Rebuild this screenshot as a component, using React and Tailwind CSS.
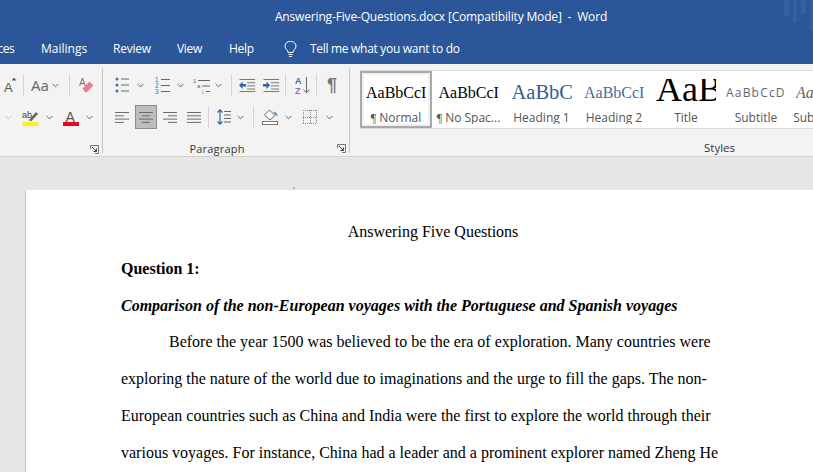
const ui = { fontFamily: '"Open Sans", "Noto Sans", sans-serif' };

function Chevron({ className = "", color = "#666" }) {
  return (
    <svg width="7" height="5" viewBox="0 0 7 5" className={className}>
      <path d="M0.7 1 L3.5 3.8 L6.3 1" fill="none" stroke={color} strokeWidth="1" />
    </svg>
  );
}

function Sep({ className = "" }) {
  return <div className={`w-px h-[22px] bg-[#d4d4d4] ${className}`} />;
}

function Launcher({ className = "" }) {
  return (
    <svg width="9" height="9" viewBox="0 0 9 9" className={className}>
      <path d="M0.5 4V0.5H8.5V8.5H5" fill="none" stroke="#777" />
      <path d="M2 2L6.5 6.5M6.5 3.5V6.5H3.5" fill="none" stroke="#444" />
    </svg>
  );
}

function Lines({ className = "", rows, w = 14 }) {
  return (
    <svg width={w} height="13" viewBox={`0 0 ${w} 13`} className={className}>
      {rows.map(([x1, x2], i) => (
        <path key={i} d={`M${x1} ${1.5 + i * 3.3}H${x2}`} stroke="#6b6b6b" strokeWidth="1" />
      ))}
    </svg>
  );
}

function Bullets({ className = "" }) {
  return (
    <svg width="14" height="16" viewBox="0 0 14 16" className={className}>
      {[2, 8, 14].map((y) => (
        <g key={y}>
          <circle cx="2" cy={y} r="1.5" fill="#3f6fa5" />
          <path d={`M6 ${y}H14`} stroke="#666" />
        </g>
      ))}
    </svg>
  );
}

function Numbered({ className = "" }) {
  return (
    <svg width="15" height="17" viewBox="0 0 15 17" className={className}>
      {[["1", 5], ["2", 11], ["3", 17]].map(([n, y]) => (
        <g key={n}>
          <text x="0" y={y} fontSize="6.5" fill="#3f6fa5" fontFamily="Liberation Sans">{n}</text>
          <path d={`M6 ${y - 2.5}H15`} stroke="#666" />
        </g>
      ))}
    </svg>
  );
}

function Multilevel({ className = "" }) {
  return (
    <svg width="17" height="17" viewBox="0 0 17 17" className={className}>
      <text x="0" y="6" fontSize="6" fill="#3f6fa5" fontFamily="Liberation Sans">1</text>
      <path d="M5 3.5H17" stroke="#666" />
      <text x="4" y="11" fontSize="6" fill="#3f6fa5" fontFamily="Liberation Sans">a</text>
      <path d="M9 9H17" stroke="#666" />
      <text x="9" y="17" fontSize="6" fill="#3f6fa5" fontFamily="Liberation Sans">i</text>
      <path d="M13 14.5H17" stroke="#666" />
    </svg>
  );
}

function Indent({ className = "", flip }) {
  return (
    <svg width="16" height="13" viewBox="0 0 16 13" className={className}>
      <path d="M0.5 0.5H16M8 3.7H16M8 6.9H16M8 10H16M0.5 12.5H16" stroke="#777" />
      {flip ? (
        <path d="M0 5H3.5V2.5L7 6.3L3.5 10V7.6H0Z" fill="#2d6aa5" />
      ) : (
        <path d="M7 5H3.5V2.5L0 6.3L3.5 10V7.6H7Z" fill="#2d6aa5" />
      )}
    </svg>
  );
}

function Sort({ className = "" }) {
  return (
    <svg width="15" height="18" viewBox="0 0 15 18" className={className}>
      <text x="0" y="8" fontSize="9" fontWeight="700" fill="#3f6fa5" fontFamily="Liberation Sans">A</text>
      <text x="0" y="17.5" fontSize="9" fontWeight="700" fill="#a065b5" fontFamily="Liberation Sans">Z</text>
      <path d="M11.5 1V16.5M8.5 13.5L11.5 16.8L14.5 13.5" fill="none" stroke="#666" />
    </svg>
  );
}

function Eraser({ className = "" }) {
  return (
    <svg width="15" height="16" viewBox="0 0 15 16" className={className}>
      <text x="0" y="9" fontSize="10" fill="#777" fontFamily="Liberation Sans">A</text>
      <path d="M3.5 11.5L10.5 4.5L14.5 8.5L8 15H6Z" fill="#e7808c" />
    </svg>
  );
}

function LineSpacing({ className = "" }) {
  return (
    <svg width="14" height="16" viewBox="0 0 14 16" className={className}>
      <path d="M3 1V15M0.5 3.5L3 0.8L5.5 3.5M0.5 12.5L3 15.2L5.5 12.5" fill="none" stroke="#2d6aa5" strokeWidth="1.2" />
      <path d="M7 2.5H14M7 6H14M7 9.5H14M7 13H14" stroke="#666" />
    </svg>
  );
}

function Shading({ className = "" }) {
  return (
    <svg width="17" height="16" viewBox="0 0 17 16" className={className}>
      <path d="M7.5 1L13 6.5L8 11L2.5 6Z" fill="#fff" stroke="#666" />
      <path d="M11 2.5C14 3 15.5 5 15.5 7.5L13 5Z" fill="#2d6aa5" />
      <rect x="0.5" y="12.5" width="15" height="3" fill="#fff" stroke="#777" />
    </svg>
  );
}

function Borders({ className = "" }) {
  return (
    <svg width="14" height="14" viewBox="0 0 14 14" className={className}>
      <path d="M0 0.5H14M0 7.5H14M0 13.5H14M0.5 0V14M7.5 0V14M13.5 0V14" fill="none" stroke="#8a8a8a" strokeDasharray="1 1" />
    </svg>
  );
}

function Highlight({ className = "" }) {
  return (
    <svg width="17" height="16" viewBox="0 0 17 16" className={className}>
      <text x="0" y="8" fontSize="9" fill="#444" fontFamily="Liberation Sans">ab</text>
      <path d="M7 10L14 2L16 4L9 11.5Z" fill="#666" />
      <rect x="0.5" y="12" width="16" height="4" fill="#fcee21" />
    </svg>
  );
}

function FontColor({ className = "" }) {
  return (
    <svg width="16" height="16" viewBox="0 0 16 16" className={className}>
      <text x="2.5" y="11.5" fontSize="14" fill="#555" fontFamily="Liberation Sans">A</text>
      <rect y="12" width="16" height="4" fill="#e00b1c" />
    </svg>
  );
}

function GrowFont({ className = "" }) {
  return (
    <svg width="13" height="16" viewBox="0 0 13 16" className={className}>
      <text x="0" y="15" fontSize="13" fill="#555" fontFamily="Liberation Sans">A</text>
      <path d="M7.5 3.5L10 0.5L12.5 3.5Z" fill="#2d6aa5" />
    </svg>
  );
}

function Bulb({ className = "" }) {
  return (
    <svg width="13" height="17" viewBox="0 0 13 17" className={className}>
      <path d="M4 11.5C4 9 1 8 1 5A5.5 4.7 0 0 1 12 5C12 8 9 9 9 11.5Z" fill="none" stroke="#fff" />
      <path d="M4.5 13.5H8.5M5 15.5H8" stroke="#fff" />
    </svg>
  );
}

function StyleItem({ preview, label, previewClass, boxClass = "mt-0 h-[35px]", width, selected, mark }) {
  return (
    <div
      className={`shrink-0 flex flex-col items-center overflow-hidden h-full ${width} ${
        selected ? "border-2 border-[#a9a9a9] bg-[#f0f0f0] p-[2px]" : "p-[4px]"
      }`}
    >
      <div className={`w-full h-full flex flex-col items-center overflow-hidden ${selected ? "bg-white" : ""}`}>
        <div className={`w-[60px] shrink-0 flex items-center whitespace-nowrap overflow-hidden ${boxClass} ${previewClass}`}>
          {preview}
        </div>
        <div className="text-[12px] leading-[16px] text-[#555] whitespace-nowrap">
          {mark && <span className="font-['Liberation_Serif']">¶ </span>}
          {label}
        </div>
      </div>
    </div>
  );
}

export default function App() {
  return (
    <div className="w-[813px] h-[472px] overflow-hidden flex flex-col bg-[#e6e6e6]" style={ui}>
      {/* title bar */}
      <div className="bg-[#2b579a] h-[64px] shrink-0 text-white relative">
        <div className="h-[32px] pt-[2px] flex items-center justify-center text-[12px] whitespace-pre pl-[69px] tracking-[-0.16px]">
          Answering-Five-Questions.docx [Compatibility Mode]  -  Word
        </div>
        <div className="h-[32px] pt-[2px] flex items-center text-[12px] whitespace-nowrap">
          <span className="w-[14px] tracking-[-0.6px] flex justify-end">ces</span>
          <span className="ml-[27px] w-[45px]">Mailings</span>
          <span className="ml-[27px] w-[37px] tracking-[-0.25px]">Review</span>
          <span className="ml-[27px] w-[25px] tracking-[-0.3px]">View</span>
          <span className="ml-[27px] w-[25px] tracking-[-0.25px]">Help</span>
          <Bulb className="ml-[30px]" />
          <span className="ml-[13px] tracking-[-0.3px]">Tell me what you want to do</span>
        </div>
        {/* faint stripes in the corner */}
        <div className="absolute top-0 right-0 flex gap-[4px] items-start">
          <div className="w-[5px] h-[16px] bg-[#34609f]" />
          <div className="w-[4px] h-[22px] bg-[#34609f]" />
          <div className="w-[5px] h-[14px] bg-[#34609f]" />
          <div className="w-[3px] h-[31px] bg-[#34609f]" />
        </div>
      </div>

      {/* ribbon */}
      <div className="bg-[#f3f3f3] h-[93px] shrink-0 flex border-b border-[#d2d2d2] text-[#444]">
        {/* font group, cut off on the left */}
        <div className="w-[102px] shrink-0 flex flex-col">
          <div className="h-[20px] mt-[11px] flex items-center">
            <GrowFont className="ml-[4px]" />
            <Sep className="ml-[6px]" />
            <span className="ml-[7px] w-[16px] text-[15px] leading-none text-[#666]">Aa</span>
            <Chevron className="ml-[5px]" />
            <Sep className="ml-[10px]" />
            <Eraser className="ml-[9px]" />
          </div>
          <div className="h-[20px] mt-[12px] flex items-center">
            <Chevron className="ml-[5px]" color="#c4c4c4" />
            <Highlight className="ml-[10px] mt-[1px]" />
            <Chevron className="ml-[7px]" />
            <FontColor className="ml-[10px] mt-[1px]" />
            <Chevron className="ml-[7px]" />
          </div>
          <div className="flex justify-end mt-[18px] pr-[3px]">
            <Launcher />
          </div>
        </div>
        <div className="w-px bg-[#c6c6c6] h-[85px] mt-[4px] shrink-0" />

        {/* paragraph group */}
        <div className="w-[246px] shrink-0 flex flex-col relative">
          <div className="h-[20px] mt-[11px] flex items-center">
            <Bullets className="ml-[12px]" />
            <Chevron className="ml-[8px]" />
            <Numbered className="ml-[11px]" />
            <Chevron className="ml-[7px]" />
            <Multilevel className="ml-[9px]" />
            <Chevron className="ml-[5px]" />
            <Sep className="ml-[9px]" />
            <Indent className="ml-[7px]" />
            <Indent className="ml-[8px]" flip />
            <Sep className="ml-[6px]" />
            <Sort className="ml-[9px]" />
            <Sep className="ml-[6px]" />
            <span className="ml-[10px] text-[18px] leading-none text-[#777] font-['Liberation_Sans'] font-bold">¶</span>
          </div>
          <div className="h-[24px] mt-[10px] flex items-center">
            <Lines className="ml-[12px]" rows={[[0, 14], [0, 9], [0, 14], [0, 9]]} />
            <div className="ml-[6px] w-[22px] h-[24px] bg-[#bdbdbd] border border-[#8c8c8c] flex items-center justify-center">
              <Lines rows={[[0, 14], [3, 11], [0, 14], [3, 11]]} />
            </div>
            <Lines className="ml-[6px]" rows={[[0, 14], [5, 14], [0, 14], [5, 14]]} />
            <Lines className="ml-[10px]" rows={[[0, 14], [0, 14], [0, 14], [0, 14]]} />
            <Sep className="ml-[7px]" />
            <LineSpacing className="ml-[8px]" />
            <Chevron className="ml-[6px]" />
            <Sep className="ml-[9px]" />
            <Shading className="ml-[8px]" />
            <Chevron className="ml-[6px]" />
            <Borders className="ml-[11px]" />
            <Chevron className="ml-[9px]" />
          </div>
          <div className="flex items-center mt-[11px] h-[16px]">
            <span className="w-[228px] text-center text-[11px] leading-none text-[#333] tracking-[0.2px]">Paragraph</span>
            <Launcher className="mr-[3px] shrink-0 absolute right-0" />
          </div>
        </div>
        <div className="w-px bg-[#c6c6c6] h-[85px] mt-[4px] shrink-0" />

        {/* styles gallery */}
        <div className="flex-1 min-w-0 flex flex-col">
          <div className="ml-[10px] mt-[6px] h-[59px] bg-white border-y border-[#dcdcdc] flex text-[#444] overflow-hidden">
            <StyleItem selected mark width="w-[72px]" label="Normal" preview="AaBbCcI" previewClass="font-['Liberation_Serif'] text-[16px] text-black" />
            <StyleItem mark width="w-[73px]" label="No Spac..." preview="AaBbCcI" previewClass="font-['Liberation_Serif'] text-[16px] text-black" />
            <StyleItem width="w-[73px]" label="Heading 1" preview="AaBbC" previewClass="font-['Liberation_Serif'] text-[20.5px] text-[#2f5f94]" />
            <StyleItem width="w-[72px]" label="Heading 2" preview="AaBbCcI" previewClass="font-['Liberation_Serif'] text-[16px] text-[#3f6e9f]" />
            <StyleItem width="w-[72px]" label="Title" preview="AaB" boxClass="mt-[4px] h-[31px] pb-[12px]" previewClass="font-['Liberation_Serif'] text-[36px] text-black" />
            <StyleItem width="w-[68px]" label="Subtitle" preview="AaBbCcD" previewClass="text-[12px] tracking-[1.2px] text-[#666]" />
            <StyleItem width="w-[72px]" label="Subtle Em..." preview="AaBbCcI" previewClass="font-['Liberation_Serif'] italic text-[16px] text-[#666]" />
          </div>
          <div className="mt-[13px] text-center text-[11.5px] leading-none text-[#333] pl-[276px]">Styles</div>
        </div>
      </div>

      {/* document area */}
      <div className="flex-1 min-h-0 pt-[33px] pl-[25px] overflow-hidden">
        <div className="bg-white h-[400px] w-[800px] border-l border-[#c8c8c8] pl-[95px] text-[16px] text-black font-['Liberation_Serif'] whitespace-nowrap">
          <div className="h-[24px] leading-[1px] text-[#555] pl-[172px] text-[10px]">'</div>
          <p className="leading-[36.75px] text-center w-[624px]">Answering Five Questions</p>
          <p className="leading-[36.75px] font-bold">Question 1:</p>
          <p className="leading-[36.75px] font-bold italic">Comparison of the non-European voyages with the Portuguese and Spanish voyages</p>
          <p className="leading-[36.75px] pl-[48px]">Before the year 1500 was believed to be the era of exploration. Many countries were</p>
          <p className="leading-[36.75px]">exploring the nature of the world due to imaginations and the urge to fill the gaps. The non-</p>
          <p className="leading-[36.75px]">European countries such as China and India were the first to explore the world through their</p>
          <p className="leading-[36.75px]">various voyages. For instance, China had a leader and a prominent explorer named Zheng He</p>
        </div>
      </div>
    </div>
  );
}
